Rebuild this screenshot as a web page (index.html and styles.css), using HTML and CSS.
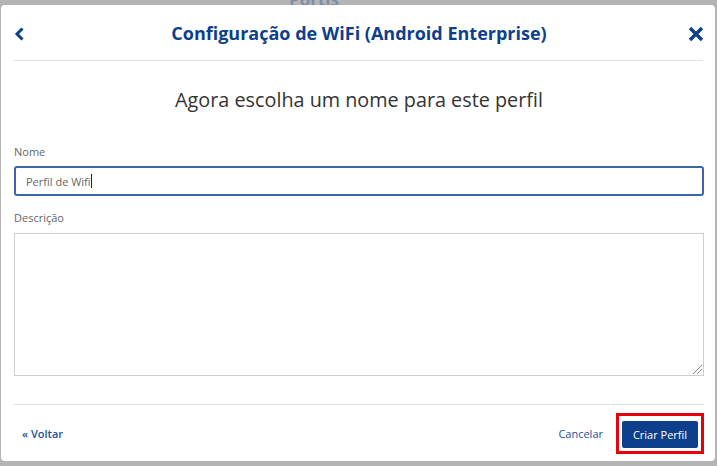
FILE: index.html
```html
<!DOCTYPE html>
<html>
<head>
<meta charset="utf-8">
<link rel="stylesheet" href="styles.css">
</head>
<body>
<div class="backdrop">
  <div class="behind">Portis</div>
  <div class="modal">
    <div class="header">
      <span class="back">
        <svg width="11" height="14" viewBox="0 0 11 14"><path d="M8.5 1.5 L3 7 L8.5 12.5" fill="none" stroke="#0e3f8c" stroke-width="3"/></svg>
      </span>
      <h1 class="title">Configuração de WiFi (Android Enterprise)</h1>
      <span class="close">
        <svg width="16" height="16" viewBox="0 0 16 16"><path d="M2 2 L14 14 M14 2 L2 14" stroke="#0e3f8c" stroke-width="3.4"/></svg>
      </span>
    </div>
    <div class="body">
      <h2 class="subtitle">Agora escolha um nome para este perfil</h2>
      <label class="label">Nome</label>
      <div class="input">Perfil de Wifi<span class="caret"></span></div>
      <label class="label label2">Descrição</label>
      <div class="textarea"><span class="grip"></span></div>
    </div>
    <div class="footer">
      <a class="voltar">« Voltar</a>
      <div class="actions">
        <a class="cancel">Cancelar</a>
        <div class="highlight"><button class="primary">Criar Perfil</button></div>
      </div>
    </div>
  </div>
</div>
</body>
</html>
```
FILE: styles.css
```css
html, body {
  margin: 0;
  padding: 0;
  width: 717px;
  height: 466px;
  overflow: hidden;
  font-family: "Open Sans", "Noto Sans", sans-serif;
}
.backdrop {
  position: relative;
  width: 717px;
  height: 466px;
  background: #b4b4b4;
  padding-top: 5px;
  box-sizing: border-box;
  overflow: hidden;
}
.behind {
  position: absolute;
  top: -12px;
  left: 289px;
  font-size: 17px;
  font-weight: 700;
  color: #7d8ea8;
}
.modal {
  position: relative;
  margin-left: 1px;
  width: 714px;
  height: 456px;
  background: #fff;
  border-radius: 4px;
  box-sizing: border-box;
  padding: 0 11px 0 13px;
  display: flex;
  flex-direction: column;
}
.header {
  height: 56px;
  border-bottom: 1px solid #e3e3e3;
  display: flex;
  align-items: center;
  justify-content: space-between;
  box-sizing: border-box;
  margin-right: 1px;
}
.back {
  display: flex;
  width: 20px;
  margin-top: 2px;
}
.close {
  display: flex;
  margin-top: 2px;
  margin-right: -1px;
}
.title {
  margin: 1px 4px 0 0;
  font-size: 18px;
  font-weight: 700;
  color: #0e3f8c;
}
.body {
  display: flex;
  flex-direction: column;
  padding-top: 24px;
}
.subtitle {
  margin: 0;
  text-align: center;
  font-size: 19.8px;
  font-weight: 400;
  color: #333;
  line-height: 30px;
}
.label {
  font-size: 11px;
  color: #666;
  margin-top: 29px;
  line-height: 16px;
}
.label2 {
  margin-top: 14px;
}
.input {
  margin-top: 6px;
  height: 30px;
  border: 2px solid #3b66aa;
  border-radius: 3px;
  box-sizing: border-box;
  padding-left: 10px;
  font-size: 11px;
  color: #666;
  display: flex;
  align-items: center;
}
.caret {
  display: inline-block;
  width: 1px;
  height: 14px;
  background: #222;
}
.textarea {
  position: relative;
  margin-top: 7px;
  height: 143px;
  border: 1px solid #cfcfcf;
  box-sizing: border-box;
}
.grip {
  position: absolute;
  right: 1px;
  bottom: 1px;
  width: 9px;
  height: 9px;
  background: linear-gradient(135deg, transparent 45%, #888 45%, #888 52%, transparent 52%, transparent 70%, #888 70%, #888 77%, transparent 77%);
}
.footer {
  margin-top: 28px;
  border-top: 1px solid #e3e3e3;
  flex: 1;
  display: flex;
  align-items: center;
  justify-content: space-between;
  padding-left: 8px;
}
.voltar {
  font-size: 11px;
  font-weight: 600;
  color: #1e4f9c;
}
.actions {
  display: flex;
  align-items: center;
}
.cancel {
  font-size: 11px;
  color: #1e4f9c;
  margin-right: 13px;
}
.highlight {
  border: 3px solid #e8000b;
  padding: 5px 3px 3px 3px;
  margin-right: 0;
}
.primary {
  display: block;
  width: 76px;
  height: 27px;
  border: none;
  border-radius: 2px;
  background: #0e3f8c;
  color: #fff;
  font-family: "Open Sans", "Noto Sans", sans-serif;
  font-size: 11px;
  padding: 0;
}
```
